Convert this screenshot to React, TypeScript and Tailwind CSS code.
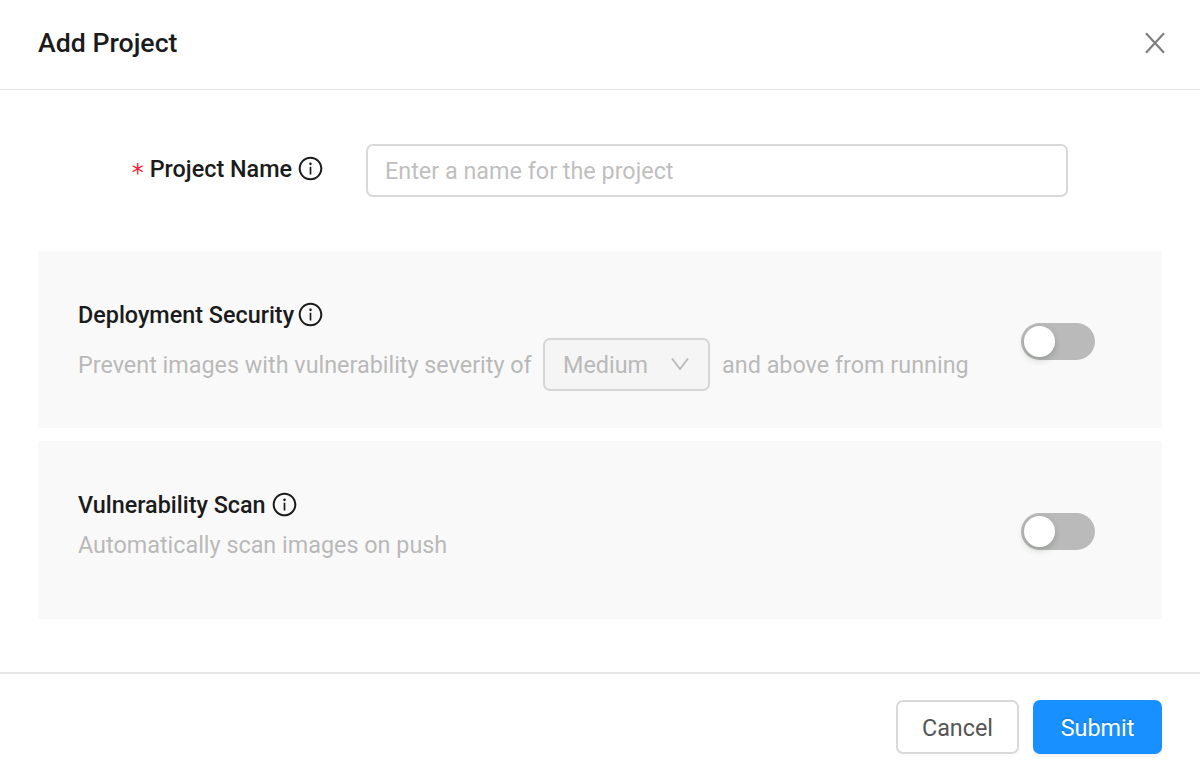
import { AiOutlineInfoCircle } from "react-icons/ai";

function Toggle({ label }: { label: string }) {
  return (
    <button
      type="button"
      role="switch"
      aria-checked={false}
      aria-label={label}
      className="flex h-[37px] w-[74px] shrink-0 items-center rounded-full bg-[#bababa] pl-[3px]"
    >
      <span className="mb-[1px] size-[31px] rounded-full bg-white shadow-[0_3px_7px_rgba(0,35,11,0.2)]" />
    </button>
  );
}

function InfoIcon() {
  return <AiOutlineInfoCircle className="mb-[2px] size-[27px] shrink-0" />;
}

export default function App() {
  return (
    <div className="flex h-[779px] w-[1200px] flex-col overflow-hidden bg-white font-['Roboto',sans-serif] text-[23.36px] leading-[36px] text-[#1b1b1b]">
      <header className="flex h-[90px] shrink-0 items-center justify-between border-b border-[#e2e2e2] pr-[34px] pl-[38px]">
        <h1 className="pb-[4px] text-[26.7px] font-medium">Add Project</h1>
        <button type="button" aria-label="Close" className="pb-[3px] text-[#7f7f7f]">
          <svg className="size-[22px]" viewBox="0 0 22 22" fill="none" stroke="currentColor" strokeWidth="2.2">
            <path d="M2 1.3 20 20.7M20 1.3 2 20.7" />
          </svg>
        </button>
      </header>

      <main className="flex flex-1 flex-col px-[38px] pt-[54px]">
        <div className="flex h-[53px] items-center">
          <label className="flex w-[286px] items-center justify-end pb-[3px] font-medium">
            <span className="mt-[8px] mr-[6px] font-['DejaVu_Sans',sans-serif] text-[24px] font-normal text-[#f5222d]">*</span>
            <span className="pb-[1px]">Project Name</span>
            <span className="ml-[5px] pt-[1px]"><InfoIcon /></span>
          </label>
          <input
            placeholder="Enter a name for the project"
            className="ml-[42px] h-[53px] w-[702px] rounded-[7px] border-2 border-[#d9d9d9] px-[17px] placeholder:text-[#bfbfbf]"
          />
        </div>

        <section className="mt-[54px] flex h-[177px] items-start justify-between bg-[#f9f9f9] pr-[67px] pl-[40px]">
          <div className="pt-[46px]">
            <h2 className="flex items-center gap-[3px] font-medium">
              Deployment Security <InfoIcon />
            </h2>
            <p className="mt-[5px] flex items-center text-[#b9b9b9]">
              Prevent images with vulnerability severity of
              <button
                type="button"
                className="mr-[12px] ml-[11.4px] flex h-[53px] w-[167px] items-center justify-between rounded-[7px] border-2 border-[#d6d6d6] bg-[#f5f5f5] pr-[18px] pl-[18px]"
              >
                Medium
                <svg className="mb-[1px] h-[14px] w-[20px]" viewBox="0 0 20 14" fill="none" stroke="currentColor" strokeWidth="1.8">
                  <path d="M2 1.5 10 12 18 1.5" />
                </svg>
              </button>
              and above from running
            </p>
          </div>
          <div className="pt-[72px]"><Toggle label="Deployment Security" /></div>
        </section>

        <section className="mt-[13px] flex h-[178px] items-start justify-between bg-[#f9f9f9] pr-[67px] pl-[40px]">
          <div className="pt-[46px]">
            <h2 className="flex items-center gap-[5px] font-medium">
              Vulnerability Scan <InfoIcon />
            </h2>
            <p className="mt-[4px] text-[#b9b9b9]">Automatically scan images on push</p>
          </div>
          <div className="pt-[72px]"><Toggle label="Vulnerability Scan" /></div>
        </section>
      </main>

      <footer className="flex h-[107px] shrink-0 items-start justify-end gap-[14px] border-t-2 border-[#e8e8e8] pt-[26px] pr-[38px]">
        <button type="button" className="h-[54px] w-[123px] rounded-[7px] border-2 border-[#d9d9d9] pt-[1px] text-[#555555] shadow-[0_3px_0_rgba(0,0,0,0.016)]">
          Cancel
        </button>
        <button type="button" className="h-[54px] w-[129px] rounded-[7px] bg-[#1890ff] pt-[1px] text-white shadow-[0_3px_0_rgba(0,0,0,0.045)] [text-shadow:0_-2px_0_rgba(0,0,0,0.12)]">
          Submit
        </button>
      </footer>
    </div>
  );
}
